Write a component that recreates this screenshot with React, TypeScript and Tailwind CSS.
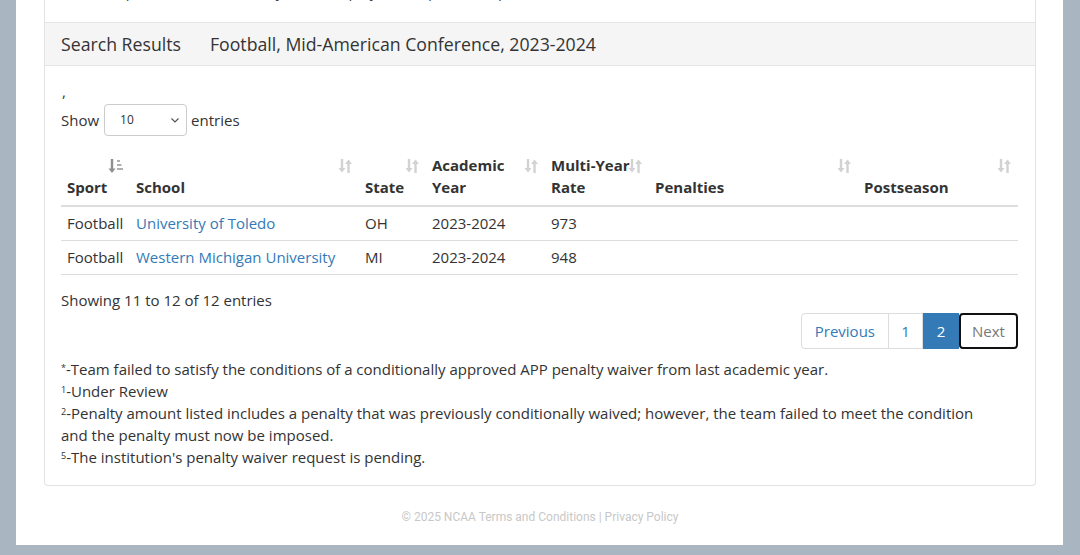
import React from 'react';

const font = { fontFamily: '"Open Sans", "Liberation Sans", sans-serif' };

function SortIcon({ active = false }: { active?: boolean }) {
  if (active) {
    return (
      <svg width="16" height="16" viewBox="0 0 16 16" className="text-[#8f8f8f]">
        <path d="M4 1v11" stroke="currentColor" strokeWidth="2.4" />
        <path d="M0.5 10.5L4 15l3.5-4.5z" fill="currentColor" />
        <rect x="9" y="2" width="3" height="2" fill="currentColor" opacity="0.7" />
        <rect x="9" y="6" width="4.5" height="2" fill="currentColor" opacity="0.7" />
        <rect x="9" y="10" width="6" height="2" fill="currentColor" opacity="0.7" />
      </svg>
    );
  }
  return (
    <svg width="16" height="16" viewBox="0 0 16 16" className="text-[#d2d2d2]">
      <path d="M5 1v10" stroke="currentColor" strokeWidth="2.4" />
      <path d="M1.5 10L5 14.5 8.5 10z" fill="currentColor" />
      <path d="M11.5 15V5" stroke="currentColor" strokeWidth="2.4" />
      <path d="M8 6l3.5-4.5L15 6z" fill="currentColor" />
    </svg>
  );
}

const headers = [
  { label: ['', 'Sport'], w: 'w-[69px]', active: true },
  { label: ['', 'School'], w: 'w-[229px]' },
  { label: ['', 'State'], w: 'w-[67px]' },
  { label: ['Academic', 'Year'], w: 'w-[119px]' },
  { label: ['Multi-Year', 'Rate'], w: 'w-[104px]' },
  { label: ['', 'Penalties'], w: 'w-[209px]' },
  { label: ['', 'Postseason'], w: 'w-[160px]' },
];

const rows = [
  ['Football', 'University of Toledo', 'OH', '2023-2024', '973'],
  ['Football', 'Western Michigan University', 'MI', '2023-2024', '948'],
];

export default function App() {
  return (
    <div className="h-[555px] overflow-hidden bg-[#a9b5c1] pl-[16px] pr-[17px]" style={font}>
      <div className="bg-white h-[545px] pr-[27px] pl-[28px] text-[#333]">
        {/* panel */}
        <div className="border-x border-b border-[#e3e3e3] rounded-b-sm">
          {/* criteria text, scrolled mostly out of view */}
          <div className="h-[22px] overflow-hidden">
            <div className="-mt-[20px] pl-[16px] text-[15px] leading-[22px] text-[#444]">
              Select a sport, conference and year to display the requested report
            </div>
          </div>

          <div className="h-[44px] bg-[#f5f5f5] border-y border-[#e6e6e6] flex items-center px-[16px] text-[17.7px] text-[#333]">
            <span>Search Results</span>
            <span className="ml-[29px]">Football, Mid-American Conference, 2023-2024</span>
          </div>

          <div className="px-[16px] pt-[15px] pb-[17px]">
            <div className="text-[15px] leading-[21px] pl-[1px]">,</div>
            <div className="mt-[2px] flex items-center h-[32px] text-[15px]">
              <span>Show</span>
              <div className="ml-[5px] w-[83px] h-[32px] border border-[#ccc] rounded-[4px] flex items-center justify-between pl-[15px] pr-[6px] text-[12px]">
                <span>10</span>
                <svg width="10" height="10" viewBox="0 0 10 10">
                  <path d="M1.5 3.5L5 7l3.5-3.5" fill="none" stroke="#555" strokeWidth="1.2" />
                </svg>
              </div>
              <span className="ml-[4px]">entries</span>
            </div>

            <table className="mt-[10px] w-[957px] table-fixed border-collapse text-[15px]">
              <colgroup>
                {headers.map((h, i) => (
                  <col key={i} className={h.w} />
                ))}
              </colgroup>
              <thead>
                <tr className="border-b-2 border-[#ddd]">
                  {headers.map((h, i) => (
                    <th key={i} className="relative text-left font-bold pt-[8px] pb-[7px] pl-[6px] pr-[20px] align-bottom leading-[22px] whitespace-nowrap">
                      <div>{h.label[0] || '\u00a0'}</div>
                      <div>{h.label[1]}</div>
                      <span className="absolute right-[6px] top-[12px]">
                        <SortIcon active={h.active} />
                      </span>
                    </th>
                  ))}
                </tr>
              </thead>
              <tbody>
                {rows.map((r, i) => (
                  <tr key={i} className="border-b border-[#ddd]">
                    <td className="pl-[6px] py-[6px] leading-[21px] whitespace-nowrap">{r[0]}</td>
                    <td className="pl-[6px] py-[6px] leading-[21px] whitespace-nowrap text-[#337ab7]">{r[1]}</td>
                    <td className="pl-[6px] py-[6px] leading-[21px]">{r[2]}</td>
                    <td className="pl-[6px] py-[6px] leading-[21px]">{r[3]}</td>
                    <td className="pl-[6px] py-[6px] leading-[21px]">{r[4]}</td>
                    <td className="pl-[6px] py-[6px] leading-[21px]"></td>
                    <td className="pl-[6px] py-[6px] leading-[21px]"></td>
                  </tr>
                ))}
              </tbody>
            </table>

            <div className="mt-[14px] text-[15px] leading-[22px]">Showing 11 to 12 of 12 entries</div>

            <div className="mt-[2px] flex justify-end pr-[1px]">
              <div className="flex h-[36px] text-[15px]">
                <div className="px-[13px] flex items-center border border-[#ddd] rounded-l-[4px] text-[#337ab7]">Previous</div>
                <div className="w-[34px] flex items-center justify-center border-y border-r border-[#ddd] text-[#337ab7]">1</div>
                <div className="w-[36px] flex items-center justify-center bg-[#337ab7] text-white">2</div>
                <div className="w-[59px] flex items-center justify-center border-2 border-[#111] rounded-[4px] text-[#777]">Next</div>
              </div>
            </div>

            <div className="mt-[9px] w-[940px] text-[15px] leading-[22px] text-[#333]">
              <div><sup className="text-[9px] leading-none">*</sup>-Team failed to satisfy the conditions of a conditionally approved APP penalty waiver from last academic year.</div>
              <div><sup className="text-[9px] leading-none">1</sup>-Under Review</div>
              <div><sup className="text-[9px] leading-none">2</sup>-Penalty amount listed includes a penalty that was previously conditionally waived; however, the team failed to meet the condition and the penalty must now be imposed.</div>
              <div><sup className="text-[9px] leading-none">5</sup>-The institution's penalty waiver request is pending.</div>
            </div>
          </div>
        </div>

        <div className="mt-[23px] text-center text-[12px] leading-[16px] text-[#c8c8c8]" style={{ fontFamily: 'Roboto, "Liberation Sans", sans-serif' }}>
          © 2025 NCAA Terms and Conditions | Privacy Policy
        </div>
      </div>
    </div>
  );
}
